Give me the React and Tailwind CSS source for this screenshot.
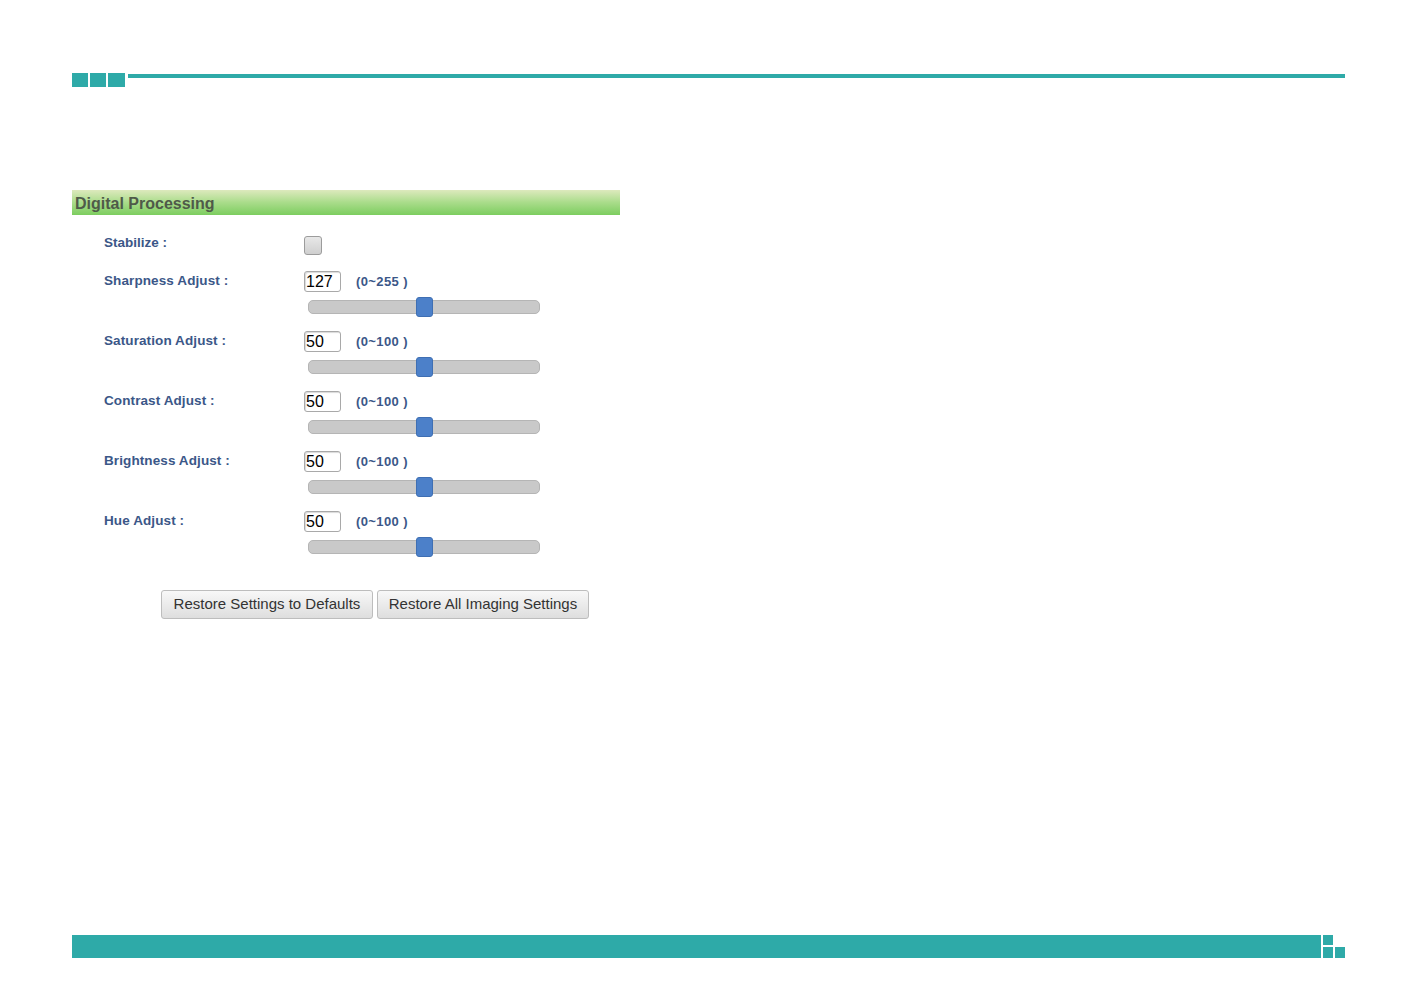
import React from 'react';

const rows = [
  { label: 'Sharpness Adjust :', value: '127', range: '(0~255 )' },
  { label: 'Saturation Adjust :', value: '50', range: '(0~100 )' },
  { label: 'Contrast Adjust :', value: '50', range: '(0~100 )' },
  { label: 'Brightness Adjust :', value: '50', range: '(0~100 )' },
  { label: 'Hue Adjust :', value: '50', range: '(0~100 )' },
];

const Slider = () => (
  <div className="relative w-[232px] h-[20px] ml-[4px] flex items-center">
    <div className="w-full h-[14px] rounded-[5px] bg-[#c9c9c9] border border-[#b5b5b5]" />
    <div className="absolute left-[108px] top-0 w-[17px] h-[20px] rounded-[3px] bg-[#4c80c9] border border-[#3f6fb3]" />
  </div>
);

const SliderRow = ({ label, value, range }) => (
  <div className="flex flex-col">
    <div className="flex items-center h-[21px]">
      <div className="w-[232px] text-[13.5px] font-bold text-[#3b5788] pl-[32px] tracking-[0.1px]">{label}</div>
      <div className="w-[37px] h-[21px] border border-[#a9a9a9] rounded-[3px] bg-white text-[16px] leading-[19px] pl-[1px] text-black shadow-[inset_1px_1px_1px_rgba(0,0,0,0.15)]">
        {value}
      </div>
      <div className="ml-[15px] text-[13px] font-bold text-[#3b5788] tracking-[0.4px]">{range}</div>
    </div>
    <div className="flex mt-[5px]">
      <div className="w-[232px]" />
      <Slider />
    </div>
  </div>
);

const App = () => {
  return (
    <div className="w-[1417px] h-[998px] bg-white px-[72px] pt-[73px] font-['Liberation_Sans',Arial,sans-serif] flex flex-col">
      <div className="flex items-start">
        <div className="flex gap-[2px]">
          <div className="w-[16px] h-[14px] bg-[#2eaaa8]" />
          <div className="w-[16px] h-[14px] bg-[#2eaaa8]" />
          <div className="w-[17px] h-[14px] bg-[#2eaaa8]" />
        </div>
        <div className="flex-1 ml-[3px] mt-[1px] h-[4px] bg-[#2eaaa8]" />
      </div>

      <div className="w-[548px] mt-[103px] h-[25px] bg-gradient-to-b from-[#dde9bd] via-[#a9dc8a] to-[#7ccd5f] flex items-center pl-[3px] pt-[2px]">
        <span className="text-[16px] font-bold text-[#4f5a49]">Digital Processing</span>
      </div>

      <div className="flex items-center mt-[21px] h-[19px]">
        <div className="w-[232px] text-[13.5px] font-bold text-[#3b5788] pl-[32px] -mt-[4px]">Stabilize :</div>
        <div className="w-[18px] h-[19px] rounded-[3px] border border-[#9c9c9c] bg-gradient-to-b from-[#e8e8e8] to-[#cfcfcf]" />
      </div>

      <div className="flex flex-col gap-[14px] mt-[16px]">
        {rows.map((r) => (
          <SliderRow key={r.label} {...r} />
        ))}
      </div>

      <div className="flex gap-[4px] mt-[33px] ml-[89px]">
        <button className="w-[212px] h-[29px] border border-[#bdbdbd] rounded-[3px] bg-gradient-to-b from-[#f8f8f8] to-[#dedede] text-[15px] text-[#333]">
          Restore Settings to Defaults
        </button>
        <button className="w-[212px] h-[29px] border border-[#bdbdbd] rounded-[3px] bg-gradient-to-b from-[#f8f8f8] to-[#dedede] text-[15px] text-[#333]">
          Restore All Imaging Settings
        </button>
      </div>

      <div className="flex-1" />

      <div className="flex items-start mb-[40px]">
        <div className="flex-1 h-[23px] bg-[#2eaaa8]" />
        <div className="flex flex-col ml-[2px] gap-[2px]">
          <div className="w-[10px] h-[10px] bg-[#2eaaa8]" />
          <div className="flex gap-[2px]">
            <div className="w-[10px] h-[11px] bg-[#2eaaa8]" />
            <div className="w-[10px] h-[11px] bg-[#2eaaa8]" />
          </div>
        </div>
      </div>
    </div>
  );
};

export default App;
